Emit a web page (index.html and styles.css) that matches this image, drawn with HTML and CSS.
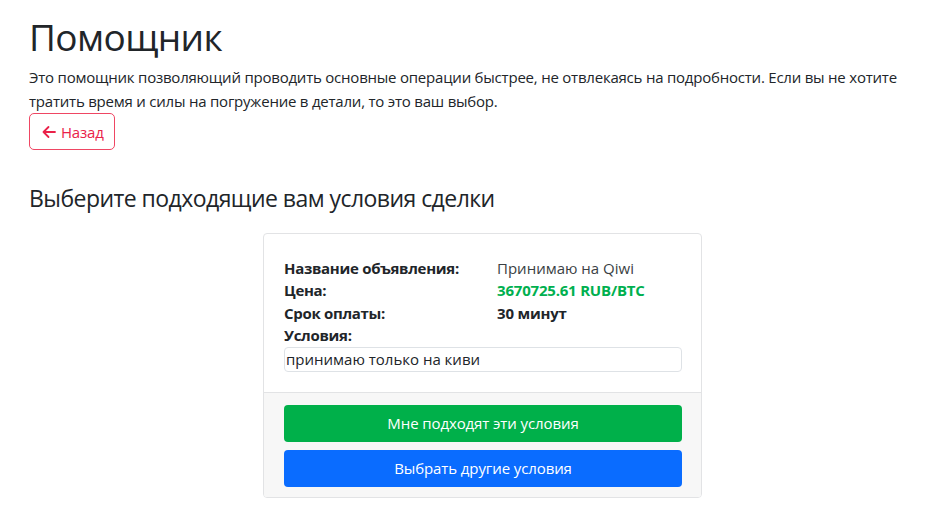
FILE: index.html
```html
<!DOCTYPE html>
<html lang="ru">
<head>
<meta charset="utf-8">
<title>Помощник</title>
<link rel="stylesheet" href="styles.css">
</head>
<body>
<main class="page">
  <h1 class="title">Помощник</h1>
  <p class="lead-text">Это помощник позволяющий проводить основные операции быстрее, не отвлекаясь на подробности. Если вы не хотите тратить время и силы на погружение в детали, то это ваш выбор.</p>
  <a class="btn-back" href="#">
    <svg class="arrow" viewBox="0 0 14 14" width="14" height="14" fill="none" stroke="currentColor" stroke-width="1.8" stroke-linecap="round" stroke-linejoin="round"><path d="M13 7H1.5M6.5 2L1.5 7l5 5"/></svg>
    <span>Назад</span>
  </a>
  <h2 class="subtitle">Выберите подходящие вам условия сделки</h2>
  <section class="card">
    <div class="card-body">
      <dl class="info">
        <dt>Название объявления:</dt><dd class="muted">Принимаю на Qiwi</dd>
        <dt>Цена:</dt><dd class="price">3670725.61 RUB/BTC</dd>
        <dt>Срок оплаты:</dt><dd class="strong">30 минут</dd>
        <dt class="full">Условия:</dt>
      </dl>
      <div class="terms">принимаю только на киви</div>
    </div>
    <div class="card-footer">
      <button class="btn btn-green" type="button">Мне подходят эти условия</button>
      <button class="btn btn-blue" type="button">Выбрать другие условия</button>
    </div>
  </section>
</main>
</body>
</html>
```

FILE: styles.css
```css
* { box-sizing: border-box; }
html, body { margin: 0; padding: 0; background: #fff; }
body {
  font-family: "Open Sans", "Noto Sans", sans-serif;
  color: #212529;
  font-size: 15px;
  line-height: 1.5;
}
.page {
  padding: 15px 24px 0 29px;
}
.title {
  margin: 0 0 6px 0;
  font-size: 37px;
  letter-spacing: -0.6px;
  font-weight: 400;
  line-height: 1.2;
}
.lead-text {
  margin: 0;
  font-size: 15px;
  letter-spacing: -0.22px;
  line-height: 24px;
}
.btn-back {
  display: inline-flex;
  align-items: center;
  gap: 5px;
  margin-top: 0;
  height: 37px;
  width: 86px;
  padding: 0 0 0 12px;
  border: 1px solid #ef4663;
  border-radius: 5px;
  color: #ea2149;
  text-decoration: none;
  font-size: 15px;
  letter-spacing: -0.2px;
}
.arrow { display: block; }
.subtitle {
  margin: 35px 0 20px 0;
  font-size: 23px;
  letter-spacing: -0.55px;
  font-weight: 400;
  line-height: 1.2;
}
.card {
  width: 439px;
  margin-left: 234px;
  border: 1px solid #e2e3e5;
  border-radius: 4px;
  overflow: hidden;
}
.card-body {
  padding: 23px 19px 20px 20px;
}
.info {
  display: grid;
  grid-template-columns: 213px 1fr;
  margin: 0;
  font-size: 15px;
  line-height: 22.5px;
}
.info dt { font-weight: 700; color: #212529; letter-spacing: -0.3px; }
.info dd { margin: 0; }
.info .full { grid-column: 1 / -1; }
.muted { color: #3a3f44; }
.price { color: #00b04f; font-weight: 700; letter-spacing: -0.2px; }
.strong { font-weight: 700; letter-spacing: -0.2px; }
.terms {
  height: 25px;
  border: 1px solid #dee2e6;
  border-radius: 4px;
  padding: 0 1px;
  font-size: 15px;
  line-height: 23px;
  color: #212529;
}
.card-footer {
  background: #f7f7f7;
  border-top: 1px solid #e2e3e5;
  padding: 12px 19px 10px 20px;
  display: flex;
  flex-direction: column;
  gap: 8px;
}
.btn {
  height: 37px;
  border: 0;
  border-radius: 4px;
  color: #fff;
  font-family: inherit;
  font-size: 15px;
  letter-spacing: -0.1px;
  cursor: pointer;
}
.btn-green { background: #00b04a; }
.btn-blue { background: #0a6cff; }
```
